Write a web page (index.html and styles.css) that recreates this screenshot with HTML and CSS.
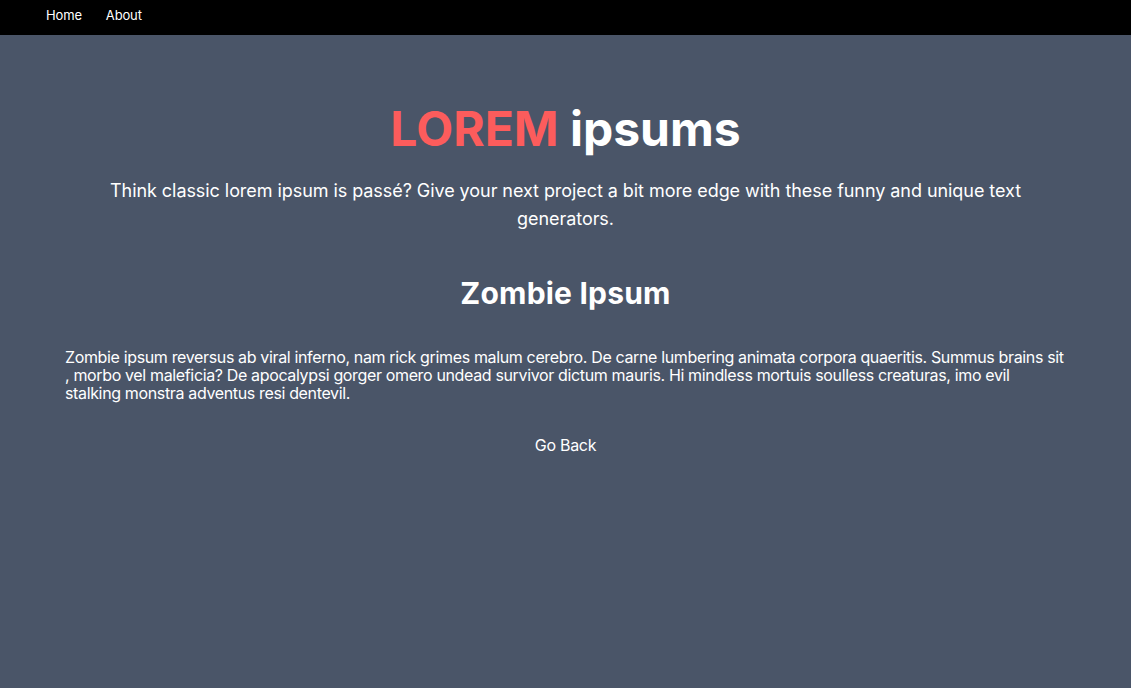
FILE: index.html
```html
<!DOCTYPE html>
<html>
<head>
<meta charset="utf-8">
<link rel="stylesheet" href="styles.css">
</head>
<body>
<nav class="nav">
  <a class="nav-link" href="#">Home</a>
  <a class="nav-link" href="#">About</a>
</nav>
<main class="main">
  <h1 class="title"><span class="title-red">LOREM</span> ipsums</h1>
  <p class="subtitle">Think classic lorem ipsum is passé? Give your next project a bit more edge with these funny and unique text generators.</p>
  <h2 class="heading">Zombie Ipsum</h2>
  <p class="body-text">Zombie ipsum reversus ab viral inferno, nam rick grimes malum cerebro. De carne lumbering animata corpora quaeritis. Summus brains sit , morbo vel maleficia? De apocalypsi gorger omero undead survivor dictum mauris. Hi mindless mortuis soulless creaturas, imo evil stalking monstra adventus resi dentevil.</p>
  <div class="back-wrap"><a class="back" href="#">Go Back</a></div>
</main>
</body>
</html>
```

FILE: styles.css
```css
html, body {
  margin: 0;
  padding: 0;
}
body {
  background: #4a5568;
  color: #fff;
  font-family: Inter, "Noto Sans", sans-serif;
  min-height: 100vh;
}
.nav {
  background: #000;
  height: 35px;
  display: flex;
  align-items: flex-start;
  gap: 24px;
  padding: 7px 46px 0;
  box-sizing: border-box;
}
.nav-link {
  color: #fff;
  text-decoration: none;
  font-size: 13px;
  line-height: 16px;
  letter-spacing: -0.15px;
}
.main {
  padding: 64px 64px;
}
.title {
  margin: 0;
  text-align: center;
  font-size: 48px;
  font-weight: 700;
  line-height: 60px;
}
.title-red {
  color: #fc5c5c;
}
.subtitle {
  margin: 18px 0 0;
  text-align: center;
  font-size: 18px;
  line-height: 28px;
  letter-spacing: -0.06px;
}
.heading {
  margin: 42px 0 0;
  text-align: center;
  font-size: 30px;
  font-weight: 700;
  line-height: 36px;
  letter-spacing: 0.2px;
}
.body-text {
  margin: 37px 0 0;
  padding: 0 0 0 1px;
  font-size: 16px;
  line-height: 18px;
  letter-spacing: -0.355px;
}
.back-wrap {
  margin-top: 33px;
  text-align: center;
}
.back {
  color: #fff;
  text-decoration: none;
  font-size: 16px;
  letter-spacing: -0.3px;
}
```
